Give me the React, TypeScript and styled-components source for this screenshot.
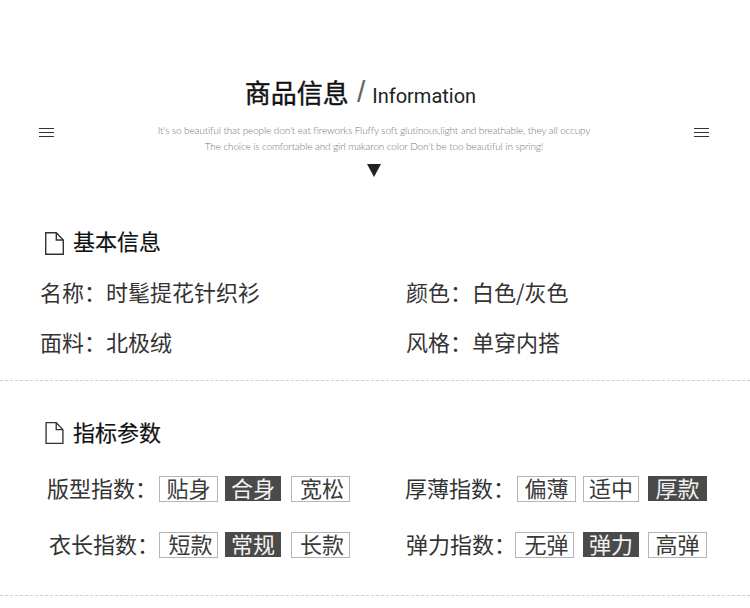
import React from "react";
import styled, { createGlobalStyle } from "styled-components";

const Global = createGlobalStyle`
  html, body { margin: 0; padding: 0; background: #fff; }
  body { font-family: "Noto Sans CJK SC", "Liberation Sans", sans-serif; color: #333; overflow: hidden; }
`;

const Page = styled.div`
  width: 750px;
  height: 608px;
  display: flex;
  flex-direction: column;
  overflow: hidden;
`;

const Hero = styled.header`
  height: 215px;
  padding-top: 74px;
  box-sizing: border-box;
  display: flex;
  flex-direction: column;
  align-items: center;
`;

const Title = styled.h1`
  margin: 0 29px 0 0;
  height: 36px;
  display: flex;
  align-items: center;
  font-weight: 400;
  color: #111;
`;

const TitleCn = styled.span`
  font-size: 26px;
  line-height: 36px;
  font-weight: 400;
  -webkit-text-stroke: 0.4px #111;
`;

const Slash = styled.span`
  font: 300 30px/36px "Liberation Sans", sans-serif;
  color: #666;
  margin: 0 7px 0 8px;
`;

const TitleEn = styled.span`
  font: 400 20px/36px Roboto, "Liberation Sans", sans-serif;
  color: #222;
  margin-top: 8px;
`;

const Intro = styled.div`
  width: 670px;
  margin: 12px 2px 0 0;
  display: grid;
  grid-template-columns: 15px 1fr 15px;
  align-items: start;
`;

const Lines = styled.p`
  margin: 0;
  text-align: center;
  font: 300 10px/16px Lato, "Open Sans", sans-serif;
  letter-spacing: -0.12px;
  color: #777;
`;

const Burger = styled.svg`
  width: 15px;
  height: 9px;
  display: block;
  margin-top: 6px;
`;

const Arrow = styled.svg`
  width: 14px;
  height: 13px;
  display: block;
  margin: 10px 2px 0 0;
`;

const Section = styled.section<{ $height: number; $top: number }>`
  height: ${(p) => p.$height}px;
  box-sizing: border-box;
  border-bottom: 1px dashed #cfcfcf;
  padding-top: ${(p) => p.$top}px;
`;

const SectionHead = styled.div`
  display: flex;
  align-items: center;
  gap: 9px;
  height: 28px;
  padding-left: 45px;
`;

const HeadText = styled.h2`
  margin: 0;
  font-size: 22px;
  line-height: 26px;
  color: #111;
  font-weight: 400;
  -webkit-text-stroke: 0.2px #111;
`;

const DocIcon = styled.svg<{ $drop: number }>`
  width: 19px;
  height: ${(p) => 23 - (p.$drop < 6 ? 1 : 0)}px;
  display: block;
  flex: none;
  margin-top: ${(p) => p.$drop}px;
`;

const InfoGrid = styled.dl`
  margin: 12px 0 0;
  padding-left: 40px;
  display: grid;
  grid-template-columns: 366px 1fr;
  grid-auto-rows: 50px;
`;

const InfoItem = styled.div`
  display: flex;
  align-items: center;
  font-size: 22px;
  line-height: 30px;
  color: #333;
`;

const InfoKey = styled.dt`
  width: 66px;
`;

const InfoValue = styled.dd`
  margin: 0;
`;

const MetricGrid = styled.div`
  margin-top: 31px;
  display: grid;
  grid-template-columns: 1fr 1fr;
  grid-auto-rows: 56px;
`;

const MetricRow = styled.div<{ $left: number }>`
  display: flex;
  align-items: flex-start;
  height: 26px;
  padding-left: ${(p) => p.$left}px;
`;

const MetricLabel = styled.span<{ $width: number }>`
  width: ${(p) => p.$width}px;
  flex: none;
  font-size: 22px;
  line-height: 22px;
  color: #333;
  white-space: nowrap;
`;

const Tag = styled.span<{ $on: boolean; $gap: number; $width: number; $nudge: number }>`
  box-sizing: border-box;
  width: ${(p) => p.$width}px;
  margin-left: ${(p) => p.$gap}px;
  height: ${(p) => (p.$on ? 25 : 26)}px;
  padding: 0 0 4px ${(p) => p.$nudge}px;
  display: flex;
  align-items: center;
  justify-content: center;
  font-size: 22px;
  line-height: 24px;
  border: 1px solid ${(p) => (p.$on ? "#4a4a4a" : "#b5b5b5")};
  background: ${(p) => (p.$on ? "#4a4a4a" : "#fff")};
  color: ${(p) => (p.$on ? "#f2f2f2" : "#3a3a3a")};
`;

const Doc = ({ drop }: { drop: number }) => (
  <DocIcon $drop={drop} viewBox="0 0 19 23" fill="none" stroke="#333" strokeWidth="1.4">
    <path d="M.7.7h10.6L18.3 8v14.3H.7z" />
    <path d="M11.3.7V8h7" />
  </DocIcon>
);

type MetricTag = { text: string; on: boolean; gap: number; width: number; nudge?: number };
const metrics: { label: string; left: number; width: number; tags: MetricTag[] }[] = [
  { label: "版型指数：", left: 47, width: 112, tags: [
    { text: "贴身", on: false, gap: 0, width: 59 },
    { text: "合身", on: true, gap: 7, width: 56 },
    { text: "宽松", on: false, gap: 10, width: 59, nudge: 3 } ] },
  { label: "厚薄指数：", left: 30, width: 112, tags: [
    { text: "偏薄", on: false, gap: 0, width: 59 },
    { text: "适中", on: false, gap: 7, width: 56 },
    { text: "厚款", on: true, gap: 9, width: 59 } ] },
  { label: "衣长指数：", left: 49, width: 110, tags: [
    { text: "短款", on: false, gap: 0, width: 59, nudge: 4 },
    { text: "常规", on: true, gap: 7, width: 56 },
    { text: "长款", on: false, gap: 10, width: 59, nudge: 3 } ] },
  { label: "弹力指数：", left: 31, width: 109, tags: [
    { text: "无弹", on: false, gap: 0, width: 59, nudge: 4 },
    { text: "弹力", on: true, gap: 9, width: 56 },
    { text: "高弹", on: false, gap: 9, width: 59 } ] },
];

export default function App() {
  return (
    <Page>
      <Global />
      <Hero>
        <Title>
          <TitleCn>商品信息</TitleCn>
          <Slash>/</Slash>
          <TitleEn>Information</TitleEn>
        </Title>
        <Intro>
          <Burger viewBox="0 0 15 9" stroke="#333" strokeWidth="1">
            <path d="M0 .5h15M0 4.5h15M0 8.5h15" />
          </Burger>
          <Lines>
            It's so beautiful that people don't eat fireworks Fluffy soft glutinous,light and breathable, they all occupy
            <br />
            The choice is comfortable and girl makaron color Don't be too beautiful in spring!
          </Lines>
          <Burger viewBox="0 0 15 9" stroke="#333" strokeWidth="1">
            <path d="M0 .5h15M0 4.5h15M0 8.5h15" />
          </Burger>
        </Intro>
        <Arrow viewBox="0 0 14 13">
          <path d="M0 0h14L7 13z" fill="#222" />
        </Arrow>
      </Hero>
      <Section $height={166} $top={11}>
        <SectionHead>
          <Doc drop={6} />
          <HeadText>基本信息</HeadText>
        </SectionHead>
        <InfoGrid>
          <InfoItem><InfoKey>名称：</InfoKey><InfoValue>时髦提花针织衫</InfoValue></InfoItem>
          <InfoItem><InfoKey>颜色：</InfoKey><InfoValue>白色/灰色</InfoValue></InfoItem>
          <InfoItem><InfoKey>面料：</InfoKey><InfoValue>北极绒</InfoValue></InfoItem>
          <InfoItem><InfoKey>风格：</InfoKey><InfoValue>单穿内搭</InfoValue></InfoItem>
        </InfoGrid>
      </Section>
      <Section $height={215} $top={36}>
        <SectionHead>
          <Doc drop={4} />
          <HeadText>指标参数</HeadText>
        </SectionHead>
        <MetricGrid>
          {metrics.map((m) => (
            <MetricRow key={m.label} $left={m.left}>
              <MetricLabel $width={m.width}>{m.label}</MetricLabel>
              {m.tags.map((t) => (
                <Tag key={t.text} $on={t.on} $gap={t.gap} $width={t.width} $nudge={t.nudge ?? 0}>
                  {t.text}
                </Tag>
              ))}
            </MetricRow>
          ))}
        </MetricGrid>
      </Section>
    </Page>
  );
}
